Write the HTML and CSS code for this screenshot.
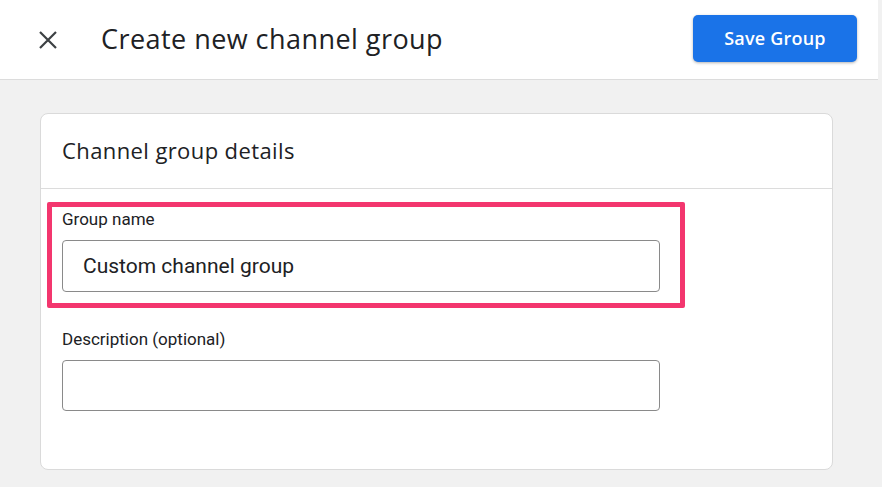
FILE: index.html
```html
<!DOCTYPE html>
<html>
<head>
<meta charset="utf-8">
<link rel="stylesheet" href="styles.css">
</head>
<body>
<header class="topbar">
  <button class="close-btn" aria-label="Close">
    <svg width="20" height="20" viewBox="0 0 20 20"><path d="M2 2 L18 18 M18 2 L2 18" stroke="#3c4043" stroke-width="2.2" fill="none"/></svg>
  </button>
  <h1 class="title">Create new channel group</h1>
  <button class="save-btn">Save Group</button>
</header>
<main class="content">
  <section class="card">
    <div class="card-head">Channel group details</div>
    <div class="card-body">
      <div class="field highlight">
        <label class="field-label">Group name</label>
        <div class="input">Custom channel group</div>
      </div>
      <div class="field plain">
        <label class="field-label">Description (optional)</label>
        <div class="input"></div>
      </div>
    </div>
  </section>
</main>
</body>
</html>
```
FILE: styles.css
```css
html, body {
  margin: 0;
  padding: 0;
}
body {
  background: #f1f1f1;
  font-family: Roboto, "Liberation Sans", sans-serif;
  color: #202124;
  width: 882px;
  height: 487px;
  overflow: hidden;
}
.topbar {
  height: 79px;
  background: #fff;
  border-bottom: 1px solid #dcdcdc;
  margin-right: 4px;
  display: flex;
  align-items: center;
  padding-left: 38px;
  padding-right: 21px;
}
.close-btn {
  border: 0;
  background: none;
  padding: 0;
  width: 20px;
  height: 20px;
  display: flex;
}
.title {
  margin: -3px 0 0 43px;
  font-family: "Open Sans", Roboto, sans-serif;
  font-weight: 400;
  font-size: 27px;
  letter-spacing: 0.45px;
  color: #202124;
  flex: 1;
}
.save-btn {
  width: 164px;
  height: 47px;
  margin-top: -2px;
  padding: 0 0 2px;
  background: #1a73e8;
  color: #fff;
  border: 0;
  border-radius: 5px;
  font-family: "Open Sans", Roboto, sans-serif;
  font-size: 18px;
  font-weight: 600;
  letter-spacing: 0.2px;
  box-shadow: 0 1px 3px rgba(0,0,0,0.3);
}
.content {
  padding: 33px 0 0 40px;
}
.card {
  width: 791px;
  height: 355px;
  background: #fff;
  border: 1px solid #dadada;
  border-radius: 8px;
}
.card-head {
  box-sizing: border-box;
  height: 75px;
  border-bottom: 1px solid #dcdcdc;
  padding-left: 21px;
  padding-bottom: 2px;
  display: flex;
  align-items: center;
  font-family: "Open Sans", Roboto, sans-serif;
  font-size: 22px;
  letter-spacing: 0.4px;
  color: #202124;
}
.card-body {
  padding-top: 13px;
}
.field {
  display: flex;
  flex-direction: column;
}
.highlight {
  box-sizing: border-box;
  width: 638px;
  margin-left: 6px;
  border: 5px solid #f3366e;
  border-radius: 2px;
  padding: 2px 20px 11px 10px;
}
.plain {
  margin-left: 21px;
  margin-top: 21px;
  width: 598px;
}
.field-label {
  font-size: 17px;
  line-height: 20px;
  height: 20px;
  color: #202124;
  margin-bottom: 11px;
}
.input {
  box-sizing: border-box;
  width: 598px;
  height: 52px;
  border: 1px solid #8a8a8a;
  border-radius: 4px;
  padding-left: 20px;
  display: flex;
  align-items: center;
  font-size: 21px;
  color: #202124;
}
.plain .input {
  height: 51px;
}
```
